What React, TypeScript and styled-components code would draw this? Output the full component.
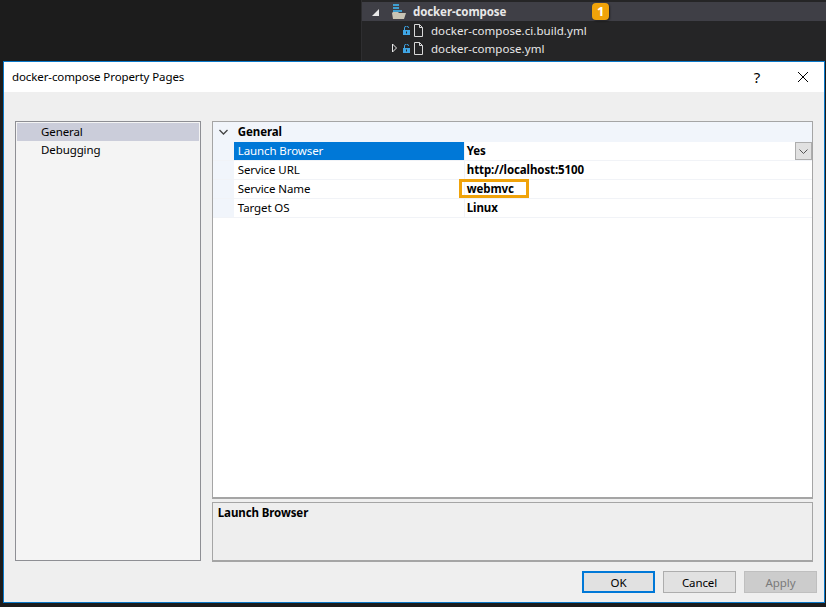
import styled, { createGlobalStyle } from 'styled-components';

const GlobalStyle = createGlobalStyle`
  html, body {
    margin: 0;
    padding: 0;
    background: #1c1c1c;
  }
  * {
    box-sizing: border-box;
  }
`;

const Page = styled.div`
  width: 826px;
  height: 607px;
  overflow: hidden;
  display: flex;
  flex-direction: column;
  background: #1c1c1c;
  font-family: 'Noto Sans', 'Liberation Sans', sans-serif;
  font-size: 11.5px;
  letter-spacing: -0.1px;
  color: #000;
`;

// solution explorer peeking out above the dialog
const Explorer = styled.div`
  height: 61px;
  margin-left: 361px;
  padding-top: 2px;
  background: #252526;
  border-left: 1px solid #2e2e30;
  color: #e8e8e8;
`;
const TreeRow = styled.div<{ $active?: boolean; $indent: number }>`
  height: ${(p) => (p.$active ? 19 : 18)}px;
  display: flex;
  align-items: center;
  padding-left: ${(p) => p.$indent}px;
  background: ${(p) => (p.$active ? '#3f3f46' : 'transparent')};
  font-weight: ${(p) => (p.$active ? 700 : 400)};
  letter-spacing: ${(p) => (p.$active ? -0.1 : 0.05)}px;
  white-space: nowrap;
`;
const TreeLabel = styled.span<{ $gap: number }>`
  margin-left: ${(p) => p.$gap}px;
`;
const Badge = styled.span`
  margin-left: 86px;
  width: 17px;
  height: 17px;
  border-radius: 4px;
  background: #f0a30a;
  box-shadow: 1px 1px 2px rgba(0, 0, 0, 0.5);
  color: #fff;
  font-size: 13px;
  font-weight: 700;
  text-align: center;
  line-height: 17px;
`;
const TwistSlot = styled.span<{ $gap: number }>`
  width: 9px;
  height: 12px;
  margin-right: ${(p) => p.$gap}px;
  display: flex;
`;

const Dialog = styled.div`
  width: 822px;
  height: 542px;
  margin-left: 3px;
  display: flex;
  flex-direction: column;
  background: #efefef;
  border: 1px solid #0a78c8;
`;
const TitleBar = styled.div`
  height: 30px;
  flex: none;
  display: flex;
  align-items: center;
  padding-left: 8px;
  background: #fff;
`;
const TitleText = styled.div`
  flex: 1;
  padding-bottom: 1px;
  white-space: nowrap;
`;
const HelpMark = styled.div`
  width: 16px;
  margin-right: 32px;
  text-align: center;
  font-size: 15px;
`;
const CloseSlot = styled.div`
  width: 12px;
  height: 12px;
  margin-right: 15px;
  display: flex;
`;
const Body = styled.div`
  flex: 1;
  display: flex;
  gap: 11px;
  padding: 29px 11px 0 11px;
`;
const NavList = styled.div`
  width: 186px;
  height: 440px;
  padding: 1px;
  background: #f4f4f4;
  border: 1px solid #8e8f94;
`;
const NavItem = styled.div<{ $active?: boolean }>`
  height: 18px;
  line-height: 18px;
  padding-left: 24px;
  background: ${(p) => (p.$active ? '#cbcdda' : 'transparent')};
`;
const RightColumn = styled.div`
  width: 602px;
  height: 441px;
  display: flex;
  flex-direction: column;
  gap: 3px;
`;
const Grid = styled.div`
  height: 378px;
  flex: none;
  background: #fff;
  border: 1px solid #a5a5a5;
  border-bottom-width: 2px;
`;
const CategoryRow = styled.div`
  height: 20px;
  padding-bottom: 1px;
  display: flex;
  align-items: center;
  background: #f1f5fb;
  font-weight: 700;
`;
const CategoryToggle = styled.span`
  width: 21px;
  display: flex;
  justify-content: center;
`;
const CategoryLabel = styled.span`
  margin-left: 4px;
`;
const PropRow = styled.div`
  height: 19px;
  display: grid;
  grid-template-columns: 21px 230px 1fr;
  border-bottom: 1px solid #f1f3f7;
`;
const Gutter = styled.div`
  background: #f1f5fb;
`;
const PropName = styled.div<{ $selected?: boolean }>`
  padding-left: 4px;
  line-height: 18px;
  background: ${(p) => (p.$selected ? '#0078d7' : 'transparent')};
  color: ${(p) => (p.$selected ? '#fff' : '#000')};
`;
const PropValue = styled.div`
  position: relative;
  padding-left: 2px;
  line-height: 18px;
  font-weight: 700;
  border-left: 1px solid #f1f3f7;
`;
const DropButton = styled.div`
  position: absolute;
  top: 0;
  right: 0;
  width: 17px;
  height: 18px;
  display: flex;
  align-items: center;
  justify-content: center;
  background: #e1e1e1;
  border: 1px solid #adadad;
`;
const Highlight = styled.div`
  position: absolute;
  top: -1px;
  left: -6px;
  width: 70px;
  height: 19px;
  border: 3px solid #f0a30a;
`;
const Description = styled.div`
  height: 60px;
  flex: none;
  padding: 2px 5px;
  font-weight: 700;
  background: #eeeeee;
  border: 1px solid #a5a5a5;
  border-bottom-width: 2px;
`;
const Footer = styled.div`
  height: 32px;
  flex: none;
  display: flex;
  justify-content: flex-end;
  gap: 8px;
  padding-right: 7px;
  margin-bottom: 8px;
`;
const DialogButton = styled.div<{ $primary?: boolean; $disabled?: boolean }>`
  width: 73px;
  height: 22px;
  margin-top: 9px;
  display: flex;
  align-items: center;
  justify-content: center;
  background: ${(p) => (p.$disabled ? '#cccccc' : '#e1e1e1')};
  color: ${(p) => (p.$disabled ? '#7a7a7a' : '#000')};
  border: ${(p) => (p.$primary ? '2px solid #0078d7' : p.$disabled ? '1px solid #bfbfbf' : '1px solid #adadad')};
`;
const IconGap = styled.span`
  width: 5px;
`;

const FileIcon = () => (
  <svg width="11" height="13" viewBox="0 0 11 13">
    <path d="M1.5.5h5l3 3v9h-8z M6.5.5v3h3" fill="none" stroke="#d8d8d8" />
  </svg>
);

const LockIcon = () => (
  <svg width="10" height="9" viewBox="0 0 10 9">
    <path d="M1.5 4V2a2 2 0 0 1 4 0" fill="none" stroke="#3fa6e6" />
    <rect x="0" y="4" width="7" height="5" fill="#3fa6e6" />
    <rect x="3" y="5.5" width="1" height="2" fill="#252526" />
  </svg>
);

const ComposeIcon = () => (
  <svg width="15" height="15" viewBox="0 0 15 15">
    <path d="M1 0h6v2H1zM1 3h6v2H1zM1 6h9v2H1z" fill="#3f9fd0" />
    <path d="M0 9l1-1h5l1 1h7l-2 6H1z" fill="#c8c4b4" />
  </svg>
);

const props = [
  { name: 'Launch Browser', value: 'Yes', selected: true },
  { name: 'Service URL', value: 'http://localhost:5100' },
  { name: 'Service Name', value: 'webmvc', marked: true },
  { name: 'Target OS', value: 'Linux' },
];

export default function App() {
  return (
    <Page>
      <GlobalStyle />
      <Explorer>
        <TreeRow $active $indent={9}>
          <TwistSlot $gap={7}>
            <svg width="9" height="12" viewBox="0 0 9 12">
              <path d="M8 3v7H1z" fill="#e8e8e8" />
            </svg>
          </TwistSlot>
          <IconGap />
          <ComposeIcon />
          <TreeLabel $gap={6}>docker-compose</TreeLabel>
          <Badge>1</Badge>
        </TreeRow>
        <TreeRow $indent={41}>
          <LockIcon />
          <FileIcon />
          <TreeLabel $gap={7}>docker-compose.ci.build.yml</TreeLabel>
        </TreeRow>
        <TreeRow $indent={28}>
          <TwistSlot $gap={4}>
            <svg width="9" height="12" viewBox="0 0 9 12">
              <path d="M2.5 2l4 4-4 4z" fill="none" stroke="#e8e8e8" />
            </svg>
          </TwistSlot>
          <LockIcon />
          <FileIcon />
          <TreeLabel $gap={7}>docker-compose.yml</TreeLabel>
        </TreeRow>
      </Explorer>
      <Dialog>
        <TitleBar>
          <TitleText>docker-compose Property Pages</TitleText>
          <HelpMark>?</HelpMark>
          <CloseSlot>
            <svg width="12" height="12" viewBox="0 0 12 12">
              <path d="M1 1l10 10M11 1L1 11" stroke="#000" fill="none" />
            </svg>
          </CloseSlot>
        </TitleBar>
        <Body>
          <NavList>
            <NavItem $active>General</NavItem>
            <NavItem>Debugging</NavItem>
          </NavList>
          <RightColumn>
            <Grid>
              <CategoryRow>
                <CategoryToggle>
                  <svg width="9" height="6" viewBox="0 0 9 6">
                    <path d="M.5 1l4 4 4-4" fill="none" stroke="#444" strokeWidth="1.3" />
                  </svg>
                </CategoryToggle>
                <CategoryLabel>General</CategoryLabel>
              </CategoryRow>
              {props.map((p) => (
                <PropRow key={p.name}>
                  <Gutter />
                  <PropName $selected={p.selected}>{p.name}</PropName>
                  <PropValue>
                    {p.value}
                    {p.marked && <Highlight />}
                    {p.selected && (
                      <DropButton>
                        <svg width="9" height="5" viewBox="0 0 9 5">
                          <path d="M.5.5l4 4 4-4" fill="none" stroke="#555" />
                        </svg>
                      </DropButton>
                    )}
                  </PropValue>
                </PropRow>
              ))}
            </Grid>
            <Description>Launch Browser</Description>
          </RightColumn>
        </Body>
        <Footer>
          <DialogButton $primary>OK</DialogButton>
          <DialogButton>Cancel</DialogButton>
          <DialogButton $disabled>Apply</DialogButton>
        </Footer>
      </Dialog>
    </Page>
  );
}
